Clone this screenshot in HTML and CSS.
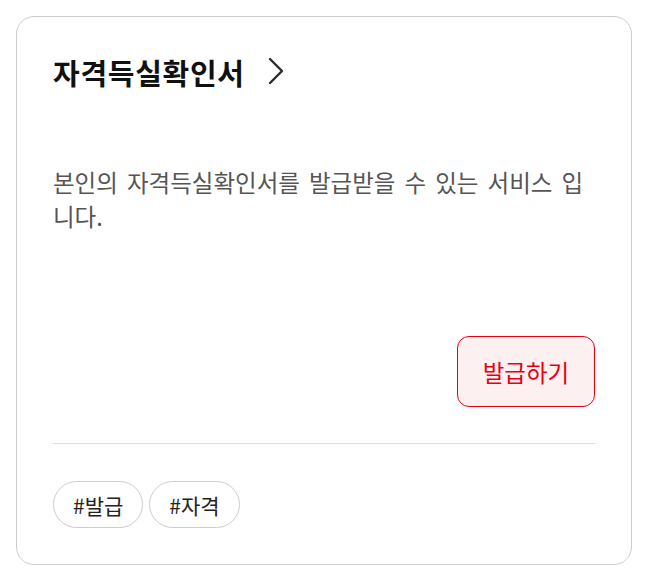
FILE: index.html
```html
<!DOCTYPE html>
<html lang="ko">
<head>
<meta charset="utf-8">
<link rel="stylesheet" href="styles.css">
</head>
<body>
<div class="card">
  <div class="card-body">
    <h2 class="title">자격득실확인서
      <svg class="chev" width="18" height="28" viewBox="0 0 18 28"><path d="M3 2 L15 14 L3 26" fill="none" stroke="#2a2a2a" stroke-width="2.4" stroke-linecap="round" stroke-linejoin="round"/></svg>
    </h2>
    <p class="desc">본인의 자격득실확인서를 발급받을 수 있는 서비스 입니다.</p>
    <div class="actions">
      <button class="btn">발급하기</button>
    </div>
  </div>
  <div class="tags">
    <span class="tag">#발급</span>
    <span class="tag">#자격</span>
  </div>
</div>
</body>
</html>
```
FILE: styles.css
```css
* { box-sizing: border-box; }
body {
  margin: 0;
  padding: 16px;
  background: #fff;
  font-family: "Noto Sans CJK KR", "Noto Sans", sans-serif;
}
.card {
  width: 616px;
  height: 549px;
  border: 1px solid #cccccc;
  border-radius: 18px;
  padding: 36px 36px 36px 36px;
  display: flex;
  flex-direction: column;
}
.card-body {
  flex: 1;
  display: flex;
  flex-direction: column;
  border-bottom: 1px solid #dddddd;
}
.title {
  margin: 0;
  height: 38px;
  font-size: 29px;
  font-weight: 700;
  color: #111;
  display: flex;
  align-items: center;
  gap: 22px;
  letter-spacing: 0.7px;
}
.chev { margin-top: -3px; }
.desc {
  margin: 74px 0 0;
  font-size: 23.5px;
  line-height: 34px;
  word-spacing: 2.5px;
  color: #555;
}
.actions {
  margin-top: auto;
  display: flex;
  justify-content: flex-end;
  padding-bottom: 36px;
}
.btn {
  width: 138px;
  height: 71px;
  border: 1px solid #e60012;
  border-radius: 12px;
  background: #fdf0f0;
  color: #e60012;
  font-family: inherit;
  font-size: 23.5px;
}
.tags {
  display: flex;
  gap: 6px;
  padding-top: 37px;
}
.tag {
  height: 47px;
  padding: 0 19px;
  border: 1px solid #cccccc;
  border-radius: 24px;
  display: flex;
  align-items: center;
  font-size: 21px;
  color: #222;
}
```
